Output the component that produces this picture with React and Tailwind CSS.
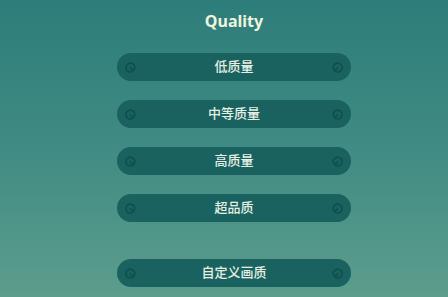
import React from "react";

const OPTIONS = ["低质量", "中等质量", "高质量", "超品质"];

const Swirl = ({ flip }) => (
  <svg
    width="11"
    height="11"
    viewBox="0 0 10 10"
    className={flip ? "-scale-x-100" : ""}
    fill="none"
    stroke="#114f4d"
    strokeWidth="1.5"
    strokeLinecap="round"
  >
    <path d="M8 7.5 A4 4 0 1 1 8.5 3.5 A2 2 0 1 1 5 5" />
  </svg>
);

const QualityButton = ({ label }) => (
  <button className="flex h-[28px] w-[234px] items-center justify-between rounded-full bg-[#19625f] px-[8px]">
    <Swirl />
    <span className="text-[13px] font-medium text-[#e6efe4]">{label}</span>
    <Swirl flip />
  </button>
);

export default function App() {
  return (
    <div
      className="flex h-[297px] w-[448px] flex-col items-center bg-gradient-to-b from-[#2d7d7a] via-[#408b83] to-[#5c9d8c] pl-[20px]"
      style={{ fontFamily: '"Noto Sans", "Noto Sans CJK SC", sans-serif' }}
    >
      <h1 className="mt-[9px] h-[24px] text-[16px] font-bold leading-[24px] text-[#eef5dc]">
        Quality
      </h1>
      <div className="mt-[20px] flex flex-col gap-[19px]">
        {OPTIONS.map((o) => (
          <QualityButton key={o} label={o} />
        ))}
      </div>
      <div className="mt-[37px]">
        <QualityButton label="自定义画质" />
      </div>
    </div>
  );
}
